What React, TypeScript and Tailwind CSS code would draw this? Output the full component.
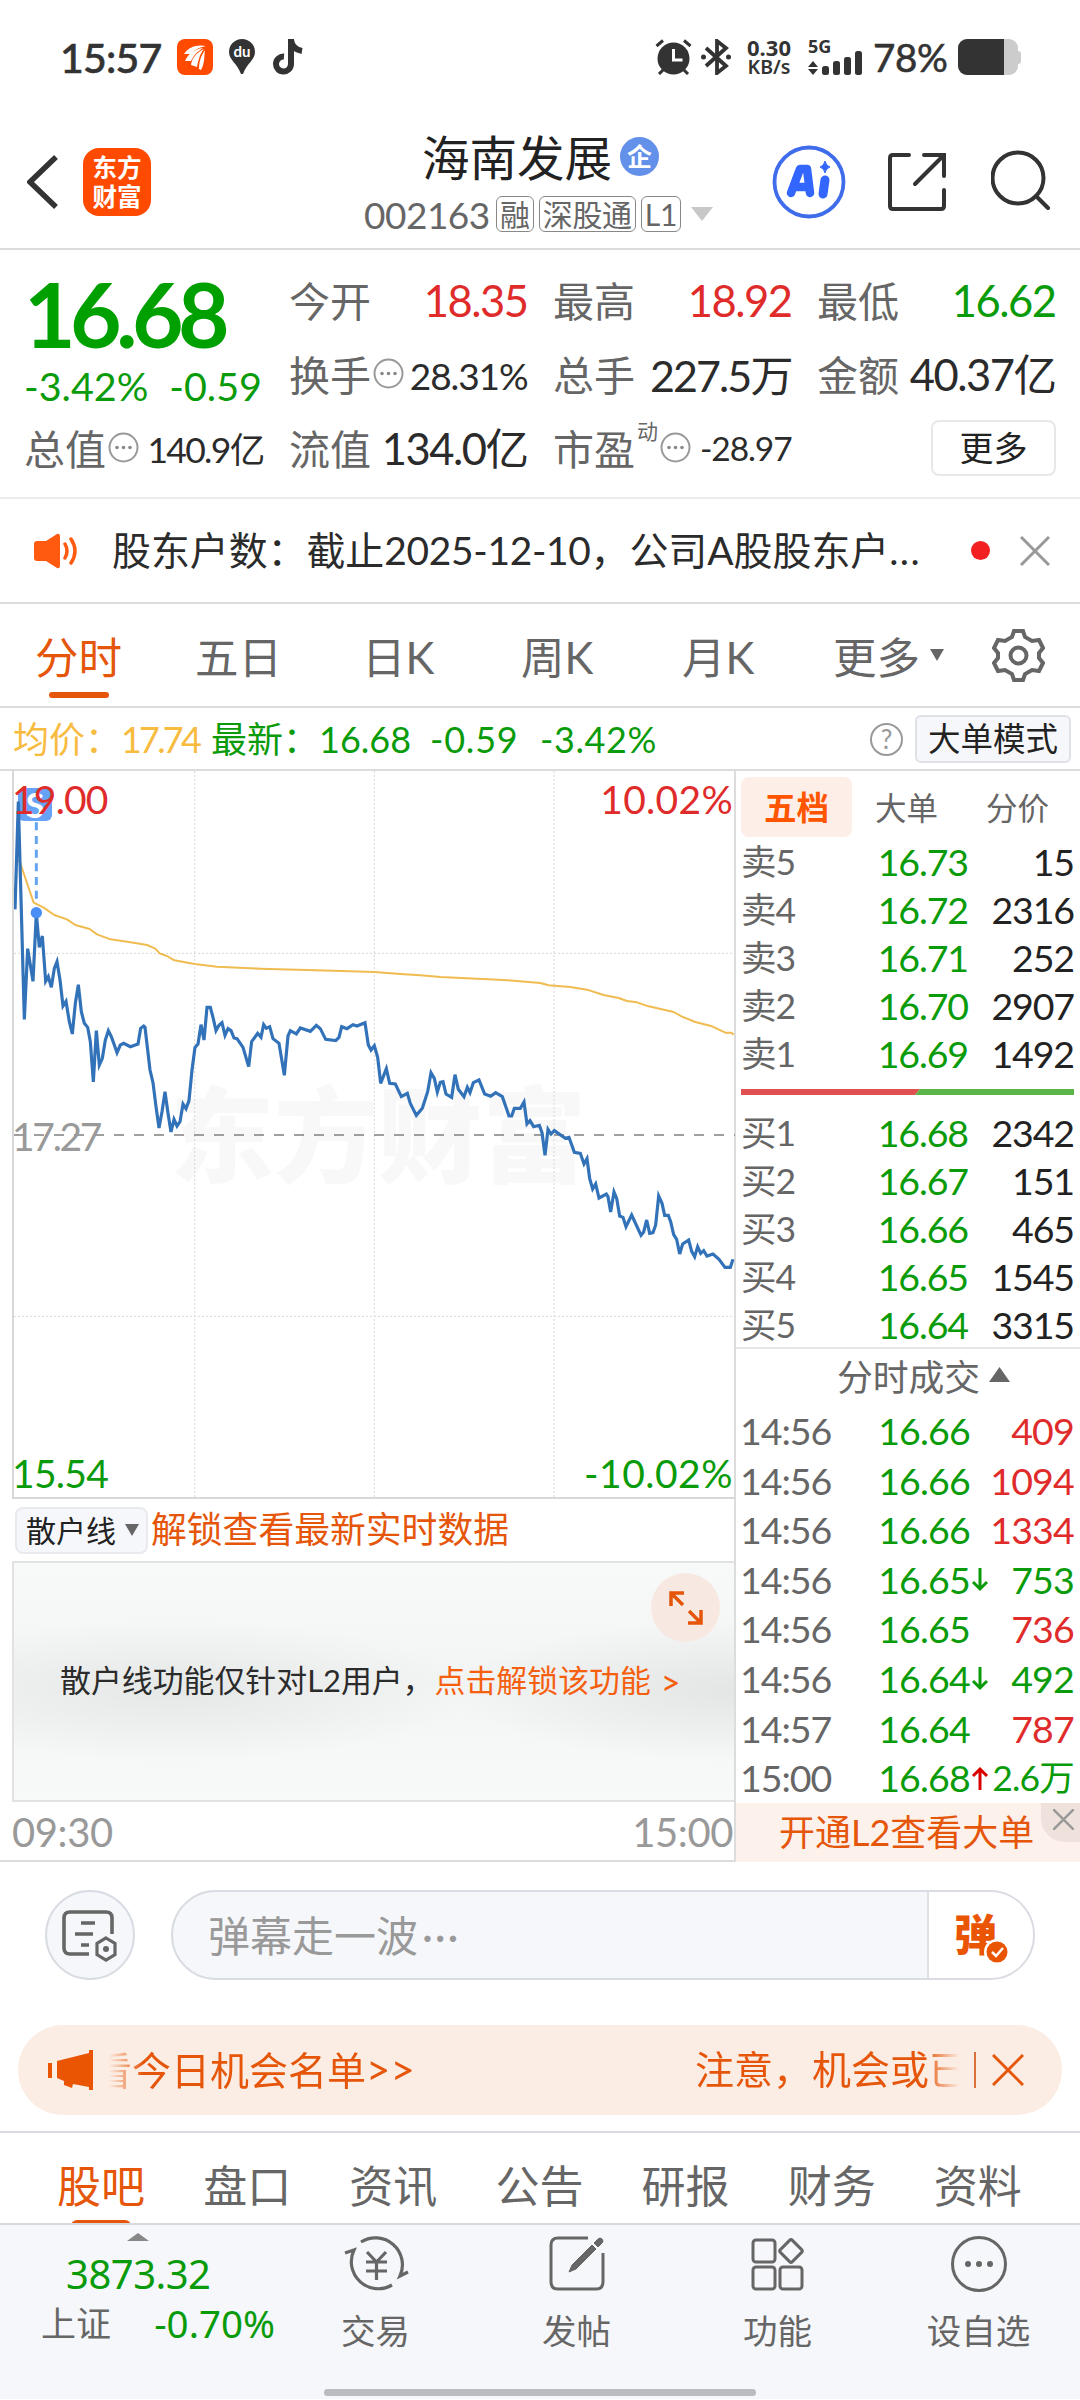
import type { ReactNode } from "react";
import clsx from "clsx";

const pricePoints =
  "44,448 54,125 72,778 82,566 98,664 108,460 117,562 126,528 136,664 144,650 153,682 162,625 170,605 179,660 188,738 197,724 207,785 216,822 225,730 234,674 243,755 252,790 262,802 270,845 279,966 288,812 297,915 306,895 315,840 324,812 333,830 342,855 350,878 360,855 370,850 390,860 413,852 421,805 430,798 434,802 449,930 458,968 467,1040 476,1104 485,1055 494,995 503,1060 512,1116 521,1078 530,1098 539,1085 548,1032 557,1046 566,1022 575,930 584,862 593,852 602,794 611,840 620,742 630,742 638,772 647,812 656,796 665,788 674,826 683,806 692,812 701,834 710,836 728,862 745,920 754,845 772,820 782,832 790,794 798,805 808,800 818,836 836,850 852,946 863,828 870,812 888,822 900,804 930,814 948,796 960,806 976,838 1006,842 1016,832 1024,800 1040,806 1058,794 1070,798 1094,788 1104,855 1112,870 1122,857 1132,892 1141,970 1158,926 1168,970 1185,972 1203,1010 1221,1000 1230,1030 1248,1066 1266,1045 1282,995 1292,938 1302,955 1311,996 1320,967 1328,965 1337,1002 1354,1012 1364,944 1374,988 1391,1010 1401,982 1409,998 1419,968 1436,960 1453,1002 1471,1009 1486,998 1506,1010 1517,1042 1526,1068 1534,1068 1542,1045 1560,1045 1571,1026 1580,1092 1589,1082 1600,1100 1617,1096 1625,1118 1634,1186 1643,1108 1652,1122 1662,1112 1695,1135 1706,1132 1722,1177 1740,1180 1751,1212 1760,1196 1768,1255 1777,1287 1786,1272 1796,1314 1818,1302 1823,1310 1831,1356 1841,1296 1849,1315 1858,1368 1868,1372 1877,1400 1894,1365 1912,1404 1922,1426 1930,1416 1939,1380 1948,1420 1958,1418 1966,1395 1975,1308 1985,1330 1993,1366 2004,1366 2011,1385 2020,1424 2029,1438 2038,1482 2047,1452 2065,1440 2074,1474 2083,1490 2092,1460 2101,1480 2110,1472 2120,1488 2138,1482 2156,1498 2174,1522 2190,1522 2198,1498";

const averagePoints =
  "54,300 60,310 82,375 100,428 130,443 162,465 200,478 225,495 268,507 290,523 330,538 400,548 440,555 465,566 478,580 500,588 522,601 583,612 650,620 780,626 1000,632 1122,636 1200,642 1260,646 1320,651 1510,660 1620,669 1645,676 1710,681 1760,689 1810,705 1855,714 1880,723 1910,727 1945,739 2020,756 2045,770 2085,786 2135,799 2175,818 2192,818 2200,824";

const sells = [
  ["卖5", "16.73", "15"],
  ["卖4", "16.72", "2316"],
  ["卖3", "16.71", "252"],
  ["卖2", "16.70", "2907"],
  ["卖1", "16.69", "1492"],
];

const buys = [
  ["买1", "16.68", "2342"],
  ["买2", "16.67", "151"],
  ["买3", "16.66", "465"],
  ["买4", "16.65", "1545"],
  ["买5", "16.64", "3315"],
];

const trades = [
  { time: "14:56", price: "16.66", volume: "409", up: true },
  { time: "14:56", price: "16.66", volume: "1094", up: true },
  { time: "14:56", price: "16.66", volume: "1334", up: true },
  { time: "14:56", price: "16.65", volume: "753", up: false, arrow: "down" },
  { time: "14:56", price: "16.65", volume: "736", up: true },
  { time: "14:56", price: "16.64", volume: "492", up: false, arrow: "down" },
  { time: "14:57", price: "16.64", volume: "787", up: true },
  { time: "15:00", price: "16.68", volume: "2.6万", up: false, arrow: "up" },
];

const StatusBar = () => (
  <div className="flex h-[114px] items-center justify-between pl-[60px] pr-[59px] text-[#333]">
    <div className="flex items-center">
      <div className="w-[117px] text-[41px] font-medium tracking-[-0.8px] [-webkit-text-stroke:0.6px]">
        15:57
      </div>
      <svg className="h-9 w-9" viewBox="0 0 36 36">
        <rect width="36" height="36" rx="8" fill="#ff4a00" />
        <path d="M7 15C11 8 20 5 29 7c-8 2-12 4-15 8Z" fill="#fff" />
        <path d="M8 22c3-7 9-12 18-13-6 4-9 7-12 13Z" fill="#fff" />
        <path d="M14 26c1-7 5-12 13-16-4 5-5 9-7 18Z" fill="#fff" />
        <path d="M22 30c0-8 2-13 6-19-1 6 0 13-4 20Z" fill="#fff" />
      </svg>
      <div className="relative ml-[14px] h-9 w-[30px]">
        <svg className="h-9 w-[30px]" viewBox="0 0 30 36">
          <path
            d="M15 0a13 13 0 0 1 13 13c0 8-8 11-12 22h-2C10 24 2 21 2 13A13 13 0 0 1 15 0Z"
            fill="#333"
          />
        </svg>
        <div className="absolute inset-x-0 top-[5px] text-center text-[15px] font-bold text-white">
          du
        </div>
      </div>
      <svg className="ml-[16px] h-9 w-8" viewBox="0 0 32 36">
        <path
          d="M18 0v25a7.500 7.500 0 1 1-7-7.500M18 1c1 7 5 10 11 11"
          fill="none"
          stroke="#333"
          strokeWidth="6"
        />
      </svg>
    </div>

    <div className="flex items-center">
      <svg className="h-9 w-[37px]" viewBox="0 0 37 36">
        <circle cx="18.500" cy="19.500" r="16" fill="#333" />
        <path
          d="M1.500 7 8 1.500M35.500 7 29 1.500M4 35l5-5M33 35l-5-5"
          stroke="#333"
          strokeWidth="3"
        />
        <path d="M18.500 10v11h9" stroke="#fff" strokeWidth="3" fill="none" />
      </svg>
      <svg className="ml-[9px] h-9 w-[30px]" viewBox="0 0 30 36">
        <path
          d="m5 9 20 18-9 7V2l9 7L5 27"
          fill="none"
          stroke="#333"
          strokeWidth="3.800"
        />
        <circle cx="2.500" cy="18" r="2.500" fill="#333" />
        <circle cx="27.500" cy="18" r="2.500" fill="#333" />
      </svg>
      <div className="ml-[14px] mr-[2px] flex w-[48px] flex-col items-center font-['Noto_Sans',sans-serif] text-[22px] font-bold leading-[20px]">
        <div>0.30</div>
        <div className="text-[19.500px] font-semibold">KB/s</div>
      </div>
      <div className="ml-[13px] h-9 w-[56px]">
        <div className="h-[14px] font-['Noto_Sans',sans-serif] text-[18px] font-bold leading-[14px]">
          5G
        </div>
        <svg className="-mt-[2px] h-6 w-14" viewBox="0 0 56 24">
          <path d="m0 16 5-6 5 6ZM0 18l5 6 5-6Z" fill="#333" />
          <rect x="14" y="15" width="7" height="9" rx="2.500" fill="#333" />
          <rect x="25" y="10" width="7" height="14" rx="2.500" fill="#333" />
          <rect x="36" y="6" width="7" height="18" rx="2.500" fill="#333" />
          <rect x="47" y="0" width="7" height="24" rx="2.500" fill="#333" />
        </svg>
      </div>
      <div className="ml-[9px] w-[77px] whitespace-nowrap text-[38.500px] tracking-[-0.3px] [-webkit-text-stroke:0.6px]">
        78%
      </div>
      <svg className="ml-[8px] h-9 w-[63px]" viewBox="0 0 63 36">
        <rect width="60" height="36" rx="9" fill="#ccc" />
        <rect x="56" y="12" width="7" height="13" rx="3" fill="#ccc" />
        <path d="M9 0h37v36H9a9 9 0 0 1-9-9V9a9 9 0 0 1 9-9Z" fill="#333" />
      </svg>
    </div>
  </div>
);

const Tag = ({ children }: { children: ReactNode }) => (
  <div className="flex h-9 flex-none items-center whitespace-nowrap rounded-[6px] border border-[#888] px-[3px] text-[30px] tracking-[-0.300px]">
    {children}
  </div>
);

const Header = () => (
  <div className="flex h-[136px] items-start border-b-2 border-[#dcdcdc]">
    <svg className="ml-[27px] mt-[41px] h-[54px] w-8" viewBox="0 0 32 54">
      <path d="M29 2 3 27l26 25" fill="none" stroke="#333" strokeWidth="5.500" />
    </svg>
    <div className="ml-6 mt-[34px] flex h-[68px] w-[68px] flex-col items-center justify-center rounded-[16px] bg-[#ff4a00] text-[24.500px] font-bold leading-[29px] text-white">
      <div>东方</div>
      <div>财富</div>
    </div>
    <div className="ml-[213px] mt-5 w-[348px]">
      <div className="flex h-[48px] items-center pl-[58px]">
        <div className="text-[47.500px] text-[#222]">海南发展</div>
        <div className="-mt-1 ml-[8px] flex h-[39px] w-[39px] items-center justify-center rounded-full bg-[#6390e8] text-[25px] font-bold text-white">
          企
        </div>
      </div>
      <div className="mt-[14px] flex h-9 items-center text-[#666]">
        <div className="w-[132px] flex-none text-[37px] tracking-[-0.500px]">002163</div>
        <div className="flex flex-none gap-[5px]">
          <Tag>融</Tag>
          <Tag>深股通</Tag>
          <Tag>L1</Tag>
        </div>
        <svg className="ml-[10px] h-4 w-[22px] flex-none" viewBox="0 0 22 16">
          <path d="M0 1h22L11 15Z" fill="#c8c8c8" />
        </svg>
      </div>
    </div>
    <svg className="ml-[60px] mt-[31px] h-[74px] w-[74px]" viewBox="0 0 74 74">
      <circle cx="37" cy="37" r="34.500" fill="none" stroke="#3f6ceb" strokeWidth="3.800" />
      <path
        d="m19 48 9-24h7l3 24M24 42h13"
        fill="none"
        stroke="#3366ff"
        strokeWidth="8.500"
        strokeLinejoin="round"
        strokeLinecap="round"
      />
      <path d="m53 35-2 14" stroke="#3366ff" strokeWidth="9" strokeLinecap="round" />
      <path d="M53 16q1 5 5 6-4 1-5 6-1-5-5-6 4-1 5-6Z" fill="#3366ff" stroke="#3366ff" />
    </svg>
    <svg className="ml-[42px] mt-[38px] h-[60px] w-[60px]" viewBox="0 0 60 60">
      <path
        d="M21 3H5Q2 3 2 6v48q0 3 3 3h48q3 0 3-3V38M36 3h20v21M56 3 27 32"
        fill="none"
        stroke="#333"
        strokeWidth="4"
        strokeLinecap="round"
      />
    </svg>
    <svg className="ml-[43px] mt-[36px] h-[60px] w-[60px]" viewBox="0 0 60 60">
      <circle cx="27" cy="28" r="25.500" fill="none" stroke="#333" strokeWidth="4" />
      <path d="m45 46 12 12" stroke="#333" strokeWidth="4" strokeLinecap="round" />
    </svg>
  </div>
);

const Dots = () => (
  <svg className="h-[31px] w-[31px] flex-none" viewBox="0 0 31 31">
    <circle cx="15.500" cy="15.500" r="14" fill="none" stroke="#999" strokeWidth="2" />
    <circle cx="9" cy="15.500" r="1.800" fill="#888" />
    <circle cx="15.500" cy="15.500" r="1.800" fill="#888" />
    <circle cx="22" cy="15.500" r="1.800" fill="#888" />
  </svg>
);

type StatProps = {
  label: string;
  value: string;
  dots?: boolean;
  tone?: string;
  sup?: string;
  size?: string;
};

const Stat = ({
  label,
  value,
  dots,
  tone = "text-[#2b2b2b]",
  sup,
  size = "text-[43.500px] tracking-[-1.500px]",
}: StatProps) => (
  <div className="-mr-[1.500px] flex h-[48px] items-center justify-between whitespace-nowrap">
    <div className="flex items-center text-[41px] text-[#666]">
      {label}
      {sup && <div className="mb-[38px] ml-[2px] text-[21px]">{sup}</div>}
      {dots && (
        <div className="mb-[4px] ml-[2px]">
          <Dots />
        </div>
      )}
    </div>
    <div className={clsx(tone, size)}>{value}</div>
  </div>
);

const Quote = () => (
  <div className="grid h-[249px] grid-cols-[238px_237px_237px_237px] gap-x-[27px] border-b-2 border-[#ececec] pl-[24px]">
    <div className="pt-[19px]">
      <div className="text-[89px] font-bold tracking-[-5.500px] text-[#00a000]">16.68</div>
      <div className="mt-[8px] flex justify-between whitespace-nowrap text-[39.500px] text-[#0a9b0a]">
        <div>-3.42%</div>
        <div>-0.59</div>
      </div>
      <div className="mt-[20px]">
        <Stat label="总值" value="140.9亿" dots size="text-[35.500px] tracking-[-1.700px]" />
      </div>
    </div>
    <div className="flex flex-col gap-[26px] pt-[27px]">
      <Stat label="今开" value="18.35" tone="text-[#e02b2b]" />
      <Stat label="换手" value="28.31%" dots size="text-[37px] tracking-[-1.100px]" />
      <Stat label="流值" value="134.0亿" />
    </div>
    <div className="flex flex-col gap-[26px] pt-[27px]">
      <Stat label="最高" value="18.92" tone="text-[#e02b2b]" />
      <Stat label="总手" value="227.5万" size="text-[43px] tracking-[-1.900px]" />
      <Stat
        label="市盈"
        value="-28.97"
        sup="动"
        dots
        size="text-[33.500px] tracking-[-1.100px]"
      />
    </div>
    <div className="flex flex-col gap-[26px] pt-[27px]">
      <Stat label="最低" value="16.62" tone="text-[#0a9b0a]" />
      <Stat label="金额" value="40.37亿" />
      <div className="-mr-[2px] -mt-[5px] flex h-[56px] w-[125px] items-center justify-center self-end rounded-[8px] border-2 border-[#e8e8e8] text-[34px] text-[#222]">
        更多
      </div>
    </div>
  </div>
);

const Notice = () => (
  <div className="flex h-[105px] items-center border-b-2 border-[#dcdcdc] pl-[34px]">
    <svg className="h-9 w-[46px]" viewBox="0 0 46 36">
      <path d="M3 8h9L23 1q3-1 3 3v28q0 4-3 3l-11-7H3q-3 0-3-3V11q0-3 3-3Z" fill="#ff5a10" />
      <path
        d="M31 11q4 7 0 14M37 6q8 12 0 24"
        fill="none"
        stroke="#ff5a10"
        strokeWidth="3.500"
        strokeLinecap="round"
      />
    </svg>
    <div className="ml-[32px] w-[859px] whitespace-nowrap text-[38.900px] text-[#2b2b2b]">
      股东户数：截止<span className="tracking-[-0.300px]">2025-12-10</span>，公司A股股东户
      <span className="tracking-[1.500px]">...</span>
    </div>
    <div className="h-[19px] w-[19px] rounded-full bg-[#f22020]" />
    <svg className="ml-[30px] h-[30px] w-[30px]" viewBox="0 0 30 30">
      <path d="m1 1 28 28M29 1 1 29" stroke="#999" strokeWidth="3" />
    </svg>
  </div>
);

const Periods = () => (
  <div className="flex h-[104px] items-center border-b-2 border-[#dcdcdc] pl-[35px] pt-[5px] text-[43.500px] text-[#666]">
    <div className="relative w-[160px] text-[#e5560a]">
      分时
      <div className="absolute -bottom-[19px] left-[14px] h-[6px] w-[60px] rounded-full bg-[#e5560a]" />
    </div>
    <div className="w-[167px]">五日</div>
    <div className="w-[159px]">日K</div>
    <div className="w-[161px]">周K</div>
    <div className="w-[151px]">月K</div>
    <div className="w-[97px]">更多</div>
    <svg className="-mt-[5px] h-3 w-[14px]" viewBox="0 0 14 12">
      <path d="M0 0h14L7 12Z" fill="#666" />
    </svg>
    <svg className="-mt-[5px] ml-[48px] h-[53px] w-[53px]" viewBox="0 0 53 53">
      <path
        d="M22 2h9l2 6 7 4 7-1 4 8-4 5v5l4 5-4 8-7-1-7 4-2 6h-9l-2-6-7-4-7 1-4-8 4-5v-5l-4-5 4-8 7 1 7-4Z"
        fill="none"
        stroke="#666"
        strokeWidth="4"
      />
      <circle cx="26.500" cy="26.500" r="8" fill="none" stroke="#666" strokeWidth="4" />
    </svg>
  </div>
);

const InfoRow = () => (
  <div className="flex h-[63px] items-center whitespace-nowrap border-b-2 border-[#dcdcdc] pl-[13px] pt-[1px] text-[36px] text-[#0a9b0a]">
    <div className="w-[198px] text-[#f7bb40]">
      均价：<span className="tracking-[-2.800px]">17.74</span>
    </div>
    <div className="w-[219px]">最新：16.68</div>
    <div className="w-[110px] tracking-[0.800px]">-0.59</div>
    <div className="w-[330px] tracking-[0.600px]">-3.42%</div>
    <div className="flex h-[33px] w-[33px] items-center justify-center rounded-full border-2 border-[#999] text-[26px] text-[#999]">
      ?
    </div>
    <div className="ml-3 flex h-12 w-[156px] items-center justify-center rounded-[6px] border-2 border-[#dfe1e6] bg-[#f6f7fa] text-[32.500px] text-[#222]">
      大单模式
    </div>
  </div>
);

const PriceChart = () => (
  <div className="relative h-[728px] border-b-2 border-l-2 border-[#d8d8d8]">
    <div className="absolute left-[156px] top-[304px] whitespace-nowrap text-[104px] font-black leading-[120px] text-[#f8f8f8]">
      东方财富
    </div>
    <div className="absolute left-[4px] top-[17px] flex h-[33px] w-[34px] items-center justify-center rounded-[6px] bg-[#66a3f7] text-[34px] font-bold text-white">
      S
    </div>
    <svg className="absolute inset-0 h-[726px] w-[721px]" viewBox="41 33 2163 2178" fill="none">
      <g stroke="#d8d8d8" strokeWidth="3" strokeDasharray="6 6">
        <path d="M583 33v2178M1122 33v2178M1661 33v2178M41 580h2163M41 1669h2163" />
      </g>
      <path d="M41 1125h2163" stroke="#808080" strokeWidth="5" strokeDasharray="30 30" />
      <polyline points={averagePoints} stroke="#f0bb50" strokeWidth="6" strokeLinejoin="round" />
      <polyline points={pricePoints} stroke="#3272b8" strokeWidth="9.500" />
      <path d="M108 187v240" stroke="#66a3f0" strokeWidth="9" strokeDasharray="24 17" />
      <circle cx="108" cy="458" r="17" fill="#4a8ff5" />
    </svg>
    <div className="absolute inset-x-0 top-[9px] -ml-[2px] flex justify-between pr-[1px] text-[39px] tracking-[-0.800px] text-[#e02b2b]">
      <div>19.00</div>
      <div className="tracking-[0.300px]">10.02%</div>
    </div>
    <div className="absolute -left-[2px] top-[346px] text-[39px] tracking-[-2.300px] text-[#999]">
      17.27
    </div>
    <div className="absolute inset-x-0 bottom-[4px] -ml-[2px] flex justify-between pr-[1px] text-[39px] tracking-[-0.700px] text-[#0a9b0a]">
      <div>15.54</div>
      <div className="tracking-[0.500px]">-10.02%</div>
    </div>
  </div>
);

const ChartColumn = () => (
  <div className="w-[734px] pl-3">
    <PriceChart />
    <div className="flex h-[62px] items-center">
      <div className="ml-[3px] flex h-[47px] w-[133px] items-center gap-[9px] rounded-[8px] border-2 border-[#e8eaee] bg-[#f6f7fa] pl-[9px] text-[30px] text-[#222]">
        散户线
        <svg className="h-3 w-[14px]" viewBox="0 0 14 12">
          <path d="M0 0h14L7 12Z" fill="#666" />
        </svg>
      </div>
      <div className="ml-[3px] text-[35.800px] text-[#e5560a]">解锁查看最新实时数据</div>
    </div>
    <div className="relative flex h-[241px] items-center border-y-2 border-l-2 border-[#e2e2e2] bg-[radial-gradient(ellipse_300px_70px_at_22%_54%,#e6e8e8,transparent),radial-gradient(ellipse_280px_70px_at_100%_54%,#e4e6e6,transparent),linear-gradient(#f8faf9,#f3f4f4_50%,#f8faf9)] pl-[46px] text-[30.900px] text-[#2b2b2b]">
      散户线功能仅针对L2用户，
      <span className="ml-[1px] text-[#f5600f]">点击解锁该功能</span>
      <span className="ml-[10px] text-[34px] text-[#f5600f]">&gt;</span>
      <div className="absolute right-[14px] top-[10px] flex h-[69px] w-[69px] items-center justify-center rounded-full bg-[#f7e9e2]">
        <svg className="h-[34px] w-[34px]" viewBox="0 0 34 34">
          <path
            d="M2 15V2h13M2 2l12 12M32 19v13H19M32 32 20 20"
            fill="none"
            stroke="#e5560a"
            strokeWidth="3.500"
          />
        </svg>
      </div>
    </div>
    <div className="flex h-[58px] items-center justify-between pr-[1px] pt-[2px] text-[40px] tracking-[-0.400px] text-[#999]">
      <div>09:30</div>
      <div>15:00</div>
    </div>
  </div>
);

const Level = ({ row }: { row: string[] }) => (
  <div className="grid h-12 grid-cols-[60px_1fr_106px] items-center text-[37.500px] tracking-[-1.100px]">
    <div className="whitespace-nowrap text-[35.500px] text-[#666]">{row[0]}</div>
    <div className="text-right text-[#0a9b0a]">{row[1]}</div>
    <div className="text-right text-[#222]">{row[2]}</div>
  </div>
);

const Arrow = ({ dir }: { dir: string }) => (
  <svg className="h-6 w-[18px]" viewBox="0 0 18 24">
    {dir === "up" ? (
      <path d="M9 24V3M2 10l7-7 7 7" fill="none" stroke="#d90000" strokeWidth="3" />
    ) : (
      <path d="M9 0v21M2 14l7 7 7-7" fill="none" stroke="#0a9b0a" strokeWidth="3" />
    )}
  </svg>
);

const OrderBook = () => (
  <div className="w-[346px] border-l-2 border-[#dcdcdc]">
    <div className="flex h-[67px] items-start pl-[5px] pt-[6px] text-[31.500px] text-[#666]">
      <div className="flex h-[60px] w-[111px] items-center justify-center rounded-[8px] bg-[#fdeee7] pt-[2px] text-[32.500px] font-bold text-[#ff5500]">
        五档
      </div>
      <div className="ml-[23px] flex h-[60px] w-[111px] items-center pt-[3px]">大单</div>
      <div className="flex h-[60px] items-center pt-[3px]">分价</div>
    </div>
    <div className="pl-[5px] pr-[6px]">
      {sells.map((row) => (
        <Level key={row[0]} row={row} />
      ))}
      <svg className="mt-[11px] h-[6px] w-[333px]" viewBox="0 0 333 6">
        <path d="M0 0h179l-5 6H0Z" fill="#e05050" />
        <path d="M179 0h154v6H174Z" fill="#5cb548" />
      </svg>
      <div className="-mb-[2px] mt-[14px]">
        {buys.map((row) => (
          <Level key={row[0]} row={row} />
        ))}
      </div>
    </div>
    <div className="flex h-[59px] items-center justify-center gap-[9px] border-t-2 border-[#e6e6e6] pl-[31px] text-[35.800px] text-[#666]">
      分时成交
      <svg className="-mt-[6px] h-[15px] w-[21px]" viewBox="0 0 21 15">
        <path d="M10.500 0 21 15H0Z" fill="#666" />
      </svg>
    </div>
    <div className="pl-1 pr-[6px]">
      {trades.map((t, i) => (
        <div
          key={i}
          className="grid h-[49.600px] grid-cols-[92px_138px_18px_1fr] items-center text-[37.500px] tracking-[-0.800px]"
        >
          <div className="tracking-[-1px] text-[#666]">{t.time}</div>
          <div className="text-right text-[#0a9b0a]">{t.price}</div>
          <div className="pl-[1px]">{t.arrow && <Arrow dir={t.arrow} />}</div>
          <div
            className={clsx(
              "flex justify-end whitespace-nowrap",
              t.up ? "text-[#e02b2b]" : "text-[#0a9b0a]",
              t.volume.includes("万") && "text-[35.500px]"
            )}
          >
            {t.volume}
          </div>
        </div>
      ))}
    </div>
    <div className="relative flex h-[59px] items-center bg-[#fdf1eb] pl-[43px] text-[36px] text-[#e5560a]">
      开通L2查看大单
      <div className="absolute right-0 top-0 flex h-[39px] w-[39px] items-center justify-center rounded-bl-[24px] bg-[#efe2dc]">
        <svg className="-mt-[6px] ml-[6px] h-[21px] w-[21px]" viewBox="0 0 21 21">
          <path d="m0 0 21 21M21 0 0 21" stroke="#999" strokeWidth="2.500" />
        </svg>
      </div>
    </div>
  </div>
);

const Composer = () => (
  <div className="mt-[28px] flex h-[90px] items-center pl-[45px]">
    <div className="flex h-[90px] w-[90px] items-center justify-center rounded-full border-2 border-[#d9dce2] bg-[#f6f7fa]">
      <svg className="mt-[2px] h-[52px] w-[56px]" viewBox="0 0 56 52" fill="none" stroke="#666">
        <path d="M27 44H8q-6 0-6-6V8q0-6 6-6h36q6 0 6 6v16" strokeWidth="3.600" />
        <path d="M19 13h14M13 24h18M19 35h8" strokeWidth="3.600" />
        <path d="m44 28 9 5.500v11L44 50l-9-5.500v-11Z" strokeWidth="3.200" />
        <circle cx="44" cy="39" r="3" fill="#666" stroke="none" />
      </svg>
    </div>
    <div className="ml-9 flex h-[90px] w-[864px] overflow-hidden rounded-full border-2 border-[#d9dce2] bg-[#f6f7fa]">
      <div className="flex flex-1 items-center pl-[35px] pt-[1px] text-[42px] text-[#999]">
        弹幕走一波<span className="ml-1 tracking-[1.800px]">···</span>
      </div>
      <div className="relative w-[106px] border-l-2 border-[#dfe1e6] bg-white">
        <div className="absolute left-[25px] top-[21px] text-[43px] font-black text-[#ea5504]">
          弹
        </div>
        <svg className="absolute left-[55px] top-[47px] h-[26px] w-[26px]" viewBox="0 0 26 26">
          <circle cx="13" cy="13" r="13" fill="#fff" />
          <circle cx="13" cy="13" r="10.500" fill="#ea5504" />
          <path d="m8 13 4 4 7-8" fill="none" stroke="#fff" strokeWidth="2.500" />
        </svg>
      </div>
    </div>
  </div>
);

const Ticker = () => (
  <div className="mx-[18px] mt-[45px] flex h-[90px] items-center rounded-full bg-[#fcede4] pl-[30px] text-[39px] text-[#e5560a]">
    <svg className="h-10 w-[46px]" viewBox="0 0 46 40">
      <path d="M0 13h4v15H0ZM9 11 41 3V0h4v40h-4v-3l-16-3-1 4-8-3v-4l-7-3Z" fill="#ea5504" />
    </svg>
    <div className="ml-[15px] flex h-[60px] w-[850px] items-center justify-between overflow-hidden whitespace-nowrap pb-[2px] [mask-image:linear-gradient(to_right,transparent,black_4%,black_96%,transparent)]">
      <div className="-ml-[16px]">
        看今日机会名单<span className="text-[42px]">&gt;&gt;</span>
      </div>
      <div className="-mr-[9px]">注意，机会或已</div>
    </div>
    <div className="ml-[15px] h-9 w-[2px] bg-[#d9713c]" />
    <svg className="ml-[16px] h-8 w-8" viewBox="0 0 32 32">
      <path d="m1 1 30 30M31 1 1 31" stroke="#e5560a" strokeWidth="3" />
    </svg>
  </div>
);

const sections = ["盘口", "资讯", "公告", "研报", "财务", "资料"];

const SectionTabs = () => (
  <div className="mt-4 flex h-[94px] items-center overflow-hidden border-b-2 border-t-2 border-[#d6d9de] pl-[57px] pt-[16px] text-[44px] text-[#666]">
    <div className="relative w-[146.300px] text-[#e5560a]">
      股吧
      <div className="absolute -bottom-[18px] left-[14px] h-[6px] w-[60px] rounded-t-full bg-[#e5560a]" />
    </div>
    {sections.map((s) => (
      <div key={s} className="w-[146.300px]">
        {s}
      </div>
    ))}
  </div>
);

const NavItem = ({ label, children }: { label: string; children: ReactNode }) => (
  <div className="flex w-[201px] flex-col items-center text-[34.500px] text-[#666]">
    <svg
      className="mt-[8px] h-[62px] w-[66px]"
      viewBox="0 0 66 62"
      fill="none"
      stroke="#666"
      strokeWidth="3"
    >
      {children}
    </svg>
    <div className="mt-[19px]">{label}</div>
  </div>
);

const BottomNav = () => (
  <div className="flex h-[174px] flex-col bg-[#f6f7fa]">
    <div className="flex h-[164px]">
      <div className="w-[275px] pt-[8px]">
        <svg className="ml-[127px] h-[8px] w-[22px]" viewBox="0 0 22 8">
          <path d="M11 0 22 8H0Z" fill="#888" />
        </svg>
        <div className="mt-[13px] pl-[66px] font-['Noto_Sans',sans-serif] text-[40px] tracking-[-0.500px] text-[#0a9b0a]">
          3873.32
        </div>
        <div className="mt-[10px] flex items-center justify-between pl-[41px] text-[35px] text-[#666]">
          上证
          <span className="font-['Noto_Sans',sans-serif] text-[38.500px] text-[#0a9b0a]">
            -0.70%
          </span>
        </div>
      </div>
      <NavItem label="交易">
        <path d="M18 9A27 27 0 0 1 57 43l8-4M49 52A27 27 0 0 1 11 17l-9 3" strokeWidth="3.200" />
        <path d="m24 19 9.500 10L43 19M23 29h21M23 38h21M33.500 28v19" strokeWidth="3.200" />
      </NavItem>
      <NavItem label="发帖">
        <path d="M44 5H14q-7 0-7 7v37q0 7 7 7h38q7 0 7-7V20" />
        <path d="m25 39 3-7 20-20 4 4-20 20ZM50 10l4-4q2-2 4 0t0 4l-4 4Z" fill="#666" strokeWidth="1" />
      </NavItem>
      <NavItem label="功能">
        <rect x="8" y="7" width="22" height="22" rx="3" />
        <rect x="8" y="34" width="22" height="22" rx="3" />
        <rect x="35" y="34" width="22" height="22" rx="3" />
        <rect x="37.500" y="9.500" width="17" height="17" rx="2" transform="rotate(45 46 18)" />
      </NavItem>
      <NavItem label="设自选">
        <circle cx="33" cy="31" r="26.500" />
        <g fill="#666" stroke="none">
          <circle cx="22" cy="31" r="3" />
          <circle cx="33" cy="31" r="3" />
          <circle cx="44" cy="31" r="3" />
        </g>
      </NavItem>
    </div>
    <div className="mx-auto h-[7px] w-[432px] rounded-full bg-[#bbbcbf]" />
  </div>
);

export default function App() {
  return (
    <div className="h-[2400px] w-[1080px] overflow-hidden bg-white font-['Lato','Noto_Sans_CJK_SC',sans-serif] leading-none">
      <StatusBar />
      <Header />
      <Quote />
      <Notice />
      <Periods />
      <InfoRow />
      <div className="flex h-[1091px] border-b-2 border-[#dcdcdc]">
        <ChartColumn />
        <OrderBook />
      </div>
      <Composer />
      <Ticker />
      <SectionTabs />
      <BottomNav />
    </div>
  );
}
